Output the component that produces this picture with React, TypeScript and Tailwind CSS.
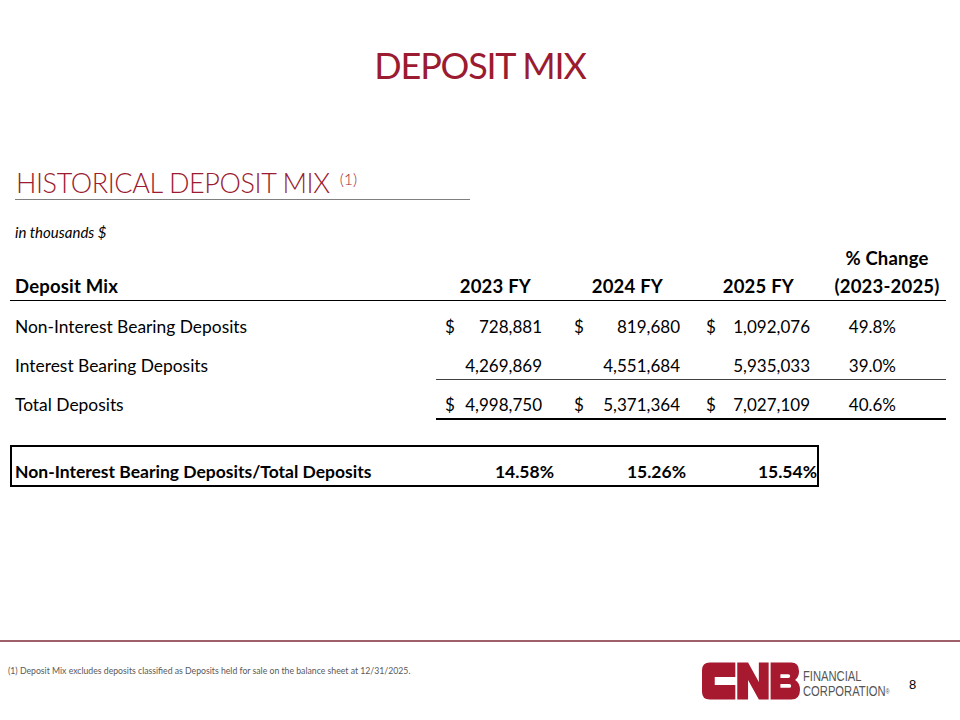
const font = { fontFamily: 'Lato, "Open Sans", sans-serif' };
const arial = { fontFamily: '"Liberation Sans", Arial, sans-serif' };

const rows = [
  { label: 'Non-Interest Bearing Deposits', vals: ['728,881', '819,680', '1,092,076'], dollar: true, pct: '49.8%', line: '' },
  { label: 'Interest Bearing Deposits', vals: ['4,269,869', '4,551,684', '5,935,033'], dollar: false, pct: '39.0%', line: 'thin' },
  { label: 'Total Deposits', vals: ['4,998,750', '5,371,364', '7,027,109'], dollar: true, pct: '40.6%', line: 'thick' },
];

// padding of the three value columns: [dollar sign offset, right offset]
const colPad = ['pl-[9px] pr-[24px]', 'pl-[8px] pr-[16px]', 'pl-[10px] pr-[16px]'];

function CnbLogo() {
  return (
    <svg width="98" height="38" viewBox="0 0 100 38" className="block">
      <g fill="#a6192e">
        {/* C */}
        <path d="M8 0 H34 V15 H13 V23 H34 V38 H8 Q0 38 0 30 V8 Q0 0 8 0 Z" />
        {/* N */}
        <path d="M36 0 H47 L58 20 V0 H68 V38 H58 L47 18 V38 H36 Z" />
        {/* B */}
        <path
          d="M70 0 H91 Q99 0 99 9 Q99 15 95 18 Q100 21 100 28 Q100 38 91 38 H70 Z M80 12 V16 H88 Q90 16 90 14 Q90 12 88 12 Z M80 22 V26 H89 Q91 26 91 24 Q91 22 89 22 Z"
          fillRule="evenodd"
        />
      </g>
    </svg>
  );
}

export default function App() {
  return (
    <div className="w-[960px] h-[720px] bg-white flex flex-col overflow-hidden text-black" style={font}>
      <h1 className="mt-[47px] text-center text-[36px] leading-none text-[#9b1b30] tracking-[-1.2px]">
        DEPOSIT MIX
      </h1>

      <div className="mt-[85px] ml-[15px] w-[455px] border-b border-[#7f7f7f] pb-[0px]">
        <span className="text-[27px] font-light leading-[30px] text-[#9b1b30] pl-[1px] tracking-[-0.4px]">
          HISTORICAL DEPOSIT MIX
        </span>
        <sup className="text-[16px] font-light text-[#9b1b30] ml-[10px] relative -top-[8px]">(1)</sup>
      </div>

      <p className="mt-[25px] ml-[15px] text-[15px] italic leading-none">in thousands $</p>

      {/* header */}
      <div className="mt-[4px] ml-[10px] w-[936px] flex items-end border-b border-black text-[18.5px] font-bold leading-[28px] tracking-[0.2px]">
        <div className="w-[426px] pl-[5px]">Deposit Mix</div>
        <div className="w-[130px] text-right pr-[35px]">2023 FY</div>
        <div className="w-[130px] text-right pr-[33px]">2024 FY</div>
        <div className="w-[130px] text-right pr-[32px]">2025 FY</div>
        <div className="w-[120px] text-center pl-[2px]">
          <div>% Change</div>
          <div>(2023-2025)</div>
        </div>
      </div>

      {/* body rows */}
      {rows.map((r, idx) => (
        <div
          key={r.label}
          className={
            'ml-[10px] w-[936px] flex text-[17px] leading-[26px] ' +
            (idx === 0 ? 'mt-[13px]' : idx === 1 ? 'mt-[13px]' : 'mt-[12px]')
          }
        >
          <div className="w-[426px] pl-[5px] text-[17.4px]">{r.label}</div>
          <div
            className={
              'flex w-[510px] ' +
              (r.line === 'thin' ? 'border-b border-[#404040]' : '') +
              (r.line === 'thick' ? 'border-b-2 border-black' : '')
            }
          >
            {r.vals.map((v, i) => (
              <div key={i} className={'w-[130px] flex justify-between ' + colPad[i]}>
                <span>{r.dollar ? '$' : ''}</span>
                <span>{v}</span>
              </div>
            ))}
            <div className="w-[120px] text-right pr-[50px]">{r.pct}</div>
          </div>
        </div>
      ))}

      {/* ratio box */}
      <div className="mt-[25px] ml-[10px] w-[809px] h-[42px] border-2 border-black flex items-end pb-[2px] text-[17.5px] font-bold leading-[22px]">
        <div className="w-[424px] pl-[3px] whitespace-nowrap">Non-Interest Bearing Deposits/Total Deposits</div>
        <div className="w-[118px] text-right">14.58%</div>
        <div className="w-[132px] text-right">15.26%</div>
        <div className="w-[131px] text-right">15.54%</div>
      </div>

      {/* footer */}
      <div className="mt-auto h-[80px] border-t-2 border-[#a0606a] flex items-start">
        <p className="mt-[25px] ml-[8px] text-[8.7px] text-[#595959] leading-none w-[694px]">
          (1) Deposit Mix excludes deposits classified as Deposits held for sale on the balance sheet at 12/31/2025.
        </p>
        <div className="mt-[20px] flex items-center">
          <CnbLogo />
          <div className="ml-[3px] w-[84px] text-[14px] leading-[15px] text-[#555555] mt-[6px]" style={arial}>
            <div className="origin-left scale-x-[0.8] whitespace-nowrap">FINANCIAL</div>
            <div className="origin-left scale-x-[0.8] whitespace-nowrap">
              CORPORATION<span className="text-[7px] align-top">®</span>
            </div>
          </div>
          <div className="ml-[22px] mt-[8px] text-[13px] text-black" style={arial}>
            8
          </div>
        </div>
      </div>
    </div>
  );
}
